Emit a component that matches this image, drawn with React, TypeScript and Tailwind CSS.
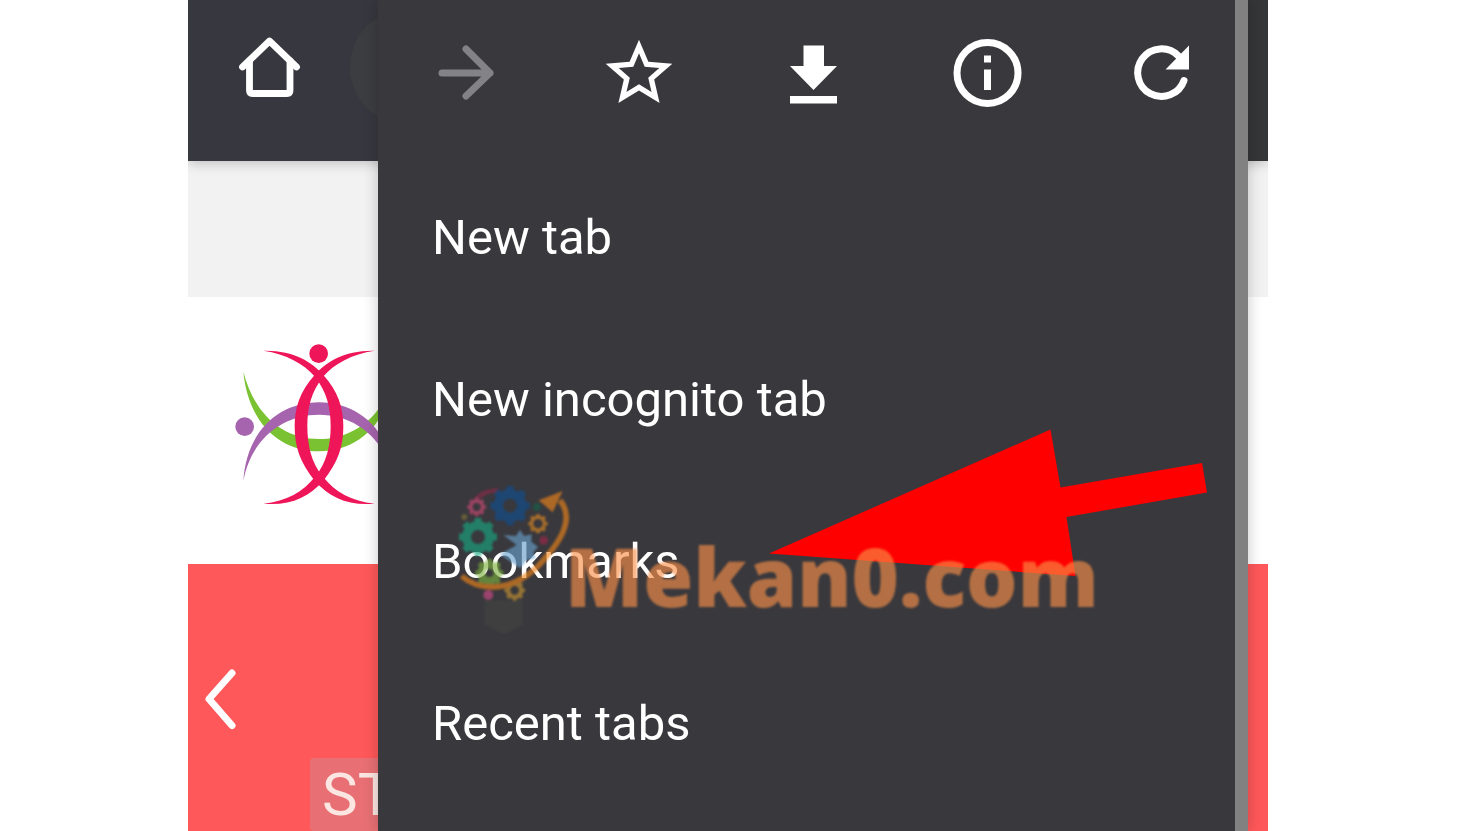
import type { ReactNode } from "react";

const actions: { label: string; icon: ReactNode; disabled?: boolean }[] = [
  {
    label: "Forward",
    disabled: true,
    icon: (
      <path
        d="M17 40H65M41 16L65 40L41 63"
        fill="none"
        stroke="#838287"
        strokeWidth="7"
        strokeLinecap="round"
        strokeLinejoin="round"
      />
    ),
  },
  {
    label: "Bookmark this page",
    icon: (
      <path
        transform="scale(3.333)"
        d="M22 9.24l-7.19-.62L12 2 9.19 8.63 2 9.24l5.46 4.73L5.82 21 12 17.27 18.18 21l-1.63-7.03L22 9.24zM12 15.4l-3.76 2.27 1-4.28-3.32-2.88 4.38-.38L12 6.1l1.71 4.04 4.38.38-3.32 2.88 1 4.28L12 15.4z"
      />
    ),
  },
  {
    label: "Download page",
    icon: <path d="M30.5 12.5H51V33H64L40.5 57L17 33H30.5ZM17 63H64V70.5H17Z" />,
  },
  {
    label: "Page info",
    icon: (
      <>
        <circle cx="40.5" cy="40" r="30.5" fill="none" stroke="currentColor" strokeWidth="7" />
        <path d="M37 22.5H44V29.5H37ZM37 36.5H44V57H37Z" />
      </>
    ),
  },
  {
    label: "Reload",
    icon: (
      <>
        <path
          d="M63 47.5A23.8 23.8 0 1 1 57.5 23"
          fill="none"
          stroke="currentColor"
          strokeWidth="7"
          strokeLinecap="round"
        />
        <path d="M68 12.5V36.5H44.5Z" />
      </>
    ),
  },
];

const items = ["New tab", "New incognito tab", "Bookmarks", "Recent tabs"];

function HomeIcon() {
  return (
    <svg viewBox="0 0 80 80" className="size-20" fill="none" stroke="white" strokeWidth="6.8" strokeLinecap="round" strokeLinejoin="round">
      <path d="M13.5 34L40.5 8L67.5 34" />
      <path d="M20.5 28V57.5Q20.5 60.5 23.5 60.5H58Q61 60.5 61 57.5V28" />
    </svg>
  );
}

function SiteLogo() {
  const figure =
    "M250 92C340 90 395 125 430 165C475 215 490 265 490 318C490 380 475 425 430 482C385 532 330 558 250 551C320 543 370 515 405 470C440 430 452 375 452 318C452 262 440 215 405 170C370 130 320 103 250 92Z";
  return (
    <svg viewBox="144 48 477 522" className="h-[174px] w-[159px]">
      <path fill="#7ac231" d="M190 155C205 310 300 394 417 394S629 310 644 155C615 290 520 357 417 357S225 290 190 155Z" />
      <path fill="#a664ae" d="M190 483C200 330 300 247 417 247S634 330 644 483C615 350 520 284 417 284S215 350 190 483Z" />
      <path fill="#ee1558" d={figure} />
      <path fill="#ee1558" d={figure} transform="translate(834 0) scale(-1 1)" />
      <circle cx="416" cy="101" r="28" fill="#ee1558" />
      <circle cx="194" cy="320" r="28" fill="#a664ae" />
    </svg>
  );
}

function Gear({ x, y, r, hole, color }: { x: number; y: number; r: number; hole: number; color: string }) {
  return (
    <g transform={`translate(${x} ${y})`} fill="none" stroke={color}>
      <circle r={(r * 0.84 + hole) / 2} strokeWidth={r * 0.84 - hole} />
      {[0, 45, 90, 135].map((a) => (
        <g key={a} transform={`rotate(${a})`} strokeWidth={r * 0.36}>
          <path d={`M0 ${-r}V${-r * 0.7}M0 ${r * 0.7}V${r}`} />
        </g>
      ))}
    </g>
  );
}

function BulbLogo() {
  return (
    <svg viewBox="99 30 372 471" className="h-[157px] w-[124px]">
      <path d="M193 388H308V462L252 490L193 462Z" fill="#41443f" />
      <path d="M165 88Q190 58 235 58" fill="none" stroke="#8a2a46" strokeWidth="14" />
      <Gear x={270} y={104} r={59} hole={21} color="#0f4f90" />
      <Gear x={174} y={198} r={57} hole={21} color="#17a880" />
      <Gear x={170} y={108} r={28} hole={12} color="#d04a74" />
      <Gear x={354} y={158} r={29} hole={14} color="#e08a20" />
      <Gear x={284} y={358} r={31} hole={13} color="#c89430" />
      <Gear x={208} y={306} r={42} hole={12} color="#7cb03c" />
      <path d="M250 192L288 195L300 176L312 195L335 190L334 212L354 228L340 244L346 262L320 268L300 292L240 250L290 222Z" fill="#68a0cc" />
      <circle cx="371" cy="208" r="13" fill="#a02848" />
      <circle cx="205" cy="372" r="15" fill="#d04a88" />
      <circle cx="133" cy="138" r="9" fill="#807438" />
      <circle cx="350" cy="108" r="12" fill="#176048" />
      <path d="M125 315Q170 355 240 346Q320 335 385 250Q470 150 420 88" fill="none" stroke="#ee8418" strokeWidth="17" />
      <path d="M356 88L428 60L398 124Z" fill="#ee8418" />
    </svg>
  );
}

export default function App() {
  return (
    <div className="min-h-screen bg-white pr-[210px] pl-[188px] font-[Roboto,sans-serif]">
      <main className="relative flex min-h-screen flex-col overflow-hidden">
        <header className="relative z-10 flex h-[161px] items-start bg-linear-to-r from-[#37373f] from-50% to-[#353637] to-50% pt-[33px] pl-[41px] shadow-[0_2px_12px_rgba(0,0,0,0.22)]">
          <button type="button" aria-label="Home" className="flex">
            <HomeIcon />
          </button>
          <div className="-mt-6 mr-5 ml-[41px] h-[116px] flex-1 rounded-l-full bg-[#3c3d40]" />
        </header>
        <div className="h-[136px] bg-[#f2f2f2]" />
        <div className="h-[267px] bg-white pt-[39px] pl-10">
          <SiteLogo />
        </div>
        <section className="flex flex-1 flex-col justify-between bg-[#ff585a] pt-[101px]">
          <button type="button" aria-label="Previous slide" className="ml-3 w-10">
            <svg viewBox="0 0 40 68" className="h-[68px] w-10" fill="none" stroke="white" strokeWidth="7" strokeLinecap="round" strokeLinejoin="round">
              <path d="M32 8L9 34L32 60.5" />
            </svg>
          </button>
          <p className="mr-5 ml-[122px] h-[73px] rounded-sm bg-[#e87074] pl-3 text-[60px]/[74px] text-[#fbe6e2]">ST</p>
        </section>

        <nav aria-label="Browser menu" className="absolute inset-y-0 right-5 left-[190px] z-20 bg-[#39383d] text-white shadow-[0_0_14px_rgba(0,0,0,0.22)]">
          <div className="grid h-[157px] grid-cols-5 items-start pt-[33px]">
            {actions.map(({ label, icon, disabled }) => (
              <button key={label} type="button" aria-label={label} disabled={disabled} className="flex justify-center">
                <svg viewBox="0 0 80 80" className="size-20" fill="currentColor">
                  {icon}
                </svg>
              </button>
            ))}
          </div>
          <ul>
            {items.map((item) => (
              <li key={item}>
                <button type="button" className="flex h-[162px] w-full items-center pl-[54px] text-left text-[49px]/[58px]">
                  {item}
                </button>
              </li>
            ))}
          </ul>
          <div className="absolute inset-y-0 right-0 w-[13px] bg-[#818182]" />
        </nav>

        <svg viewBox="0 0 440 148" className="absolute top-[429px] left-[581px] z-30 h-[148px] w-[440px]" fill="#ff0000">
          <path d="M0 124.5L281.500 0.500L291.500 58.500L433 34L438 63.500L297.500 88L306.500 147Z" />
        </svg>

        <div className="absolute top-[481px] left-[265px] z-40 flex items-start opacity-[0.64] blur-[1px]">
          <BulbLogo />
          <p className="-ml-3 pt-10 font-['Open_Sans',sans-serif] text-[81px]/[110px] font-extrabold text-[#f99048]">Mekan0.com</p>
        </div>
      </main>
    </div>
  );
}
